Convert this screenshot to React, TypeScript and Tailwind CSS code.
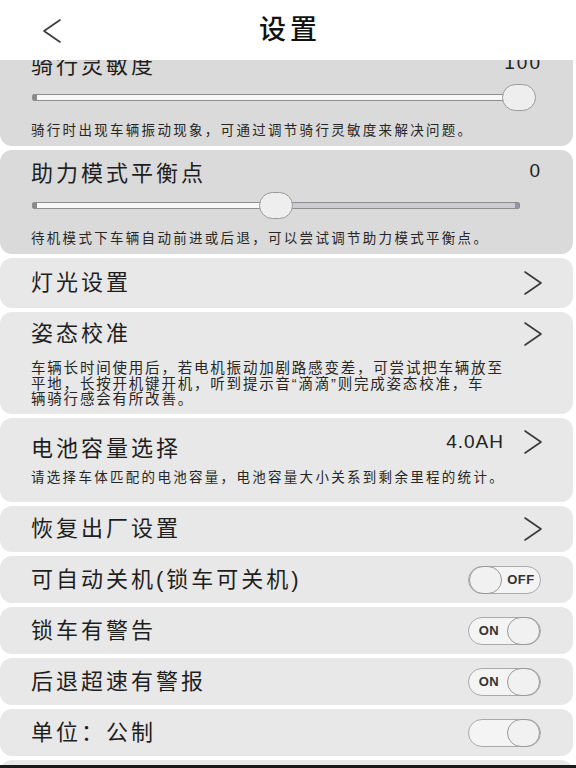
import React from 'react';

const Chevron = ({ left = false }: { left?: boolean }) => (
  <svg width="20" height="26" viewBox="0 0 20 26" fill="none" stroke="#3a3a3a" strokeWidth="1.6" strokeLinecap="round" strokeLinejoin="round">
    {left ? <polyline points="18,2 2,13 18,24" /> : <polyline points="2,2 18,13 2,24" />}
  </svg>
);

const Slider = ({ pct }: { pct: number }) => (
  <div className="relative h-[7px] rounded-[2px] border border-[#8e8e8e] bg-[#cdcdd1]">
    <div className="h-full bg-[#f7f7f7]" style={{ width: `${pct}%` }} />
    <div className="absolute left-0 top-0 h-full w-[4px] bg-[#8a8a8a]" />
    <div className="absolute right-0 top-0 h-full w-[4px] bg-[#9494a0]" />
    <div
      className="absolute top-[-11px] h-[27px] w-[34px] rounded-full border border-[#9a9a9a] bg-[#eeeeee]"
      style={{ left: `calc(${pct}% - 17px)` }}
    />
  </div>
);

const Toggle = ({ state }: { state: 'on' | 'off' | 'blank' }) => {
  const knob = <div className="h-[28px] w-[33px] shrink-0 rounded-full border border-[#999] bg-[#f1f1f1]" />;
  return (
    <div className="flex h-[28px] w-[73px] items-center rounded-full border border-[#aaa] bg-[#f4f4f4] text-[13px] font-bold tracking-[0.5px] text-[#333]">
      {state === 'off' && (
        <>
          {knob}
          <span className="flex-1 text-center">OFF</span>
        </>
      )}
      {state === 'on' && (
        <>
          <span className="flex-1 pl-[2px] text-center">ON</span>
          {knob}
        </>
      )}
      {state === 'blank' && (
        <>
          <span className="flex-1" />
          {knob}
        </>
      )}
    </div>
  );
};

const title = 'text-[22px] leading-[28px] tracking-[3px] text-[#1e1e1e]';
const desc = 'text-[13.5px] leading-[18px] tracking-[2.3px] text-[#262626]';

const SliderCard = ({ name, value, pct, note }: { name: string; value: string; pct: number; note: string }) => (
  <div className="mr-[3px] h-[104px] rounded-[12px] bg-[#dadada] pt-[10px]">
    <div className="flex items-start justify-between pl-[31px] pr-[31px]">
      <span className={title}>{name}</span>
      <span className="text-[19px] leading-[22px] tracking-[2px] text-[#222]">{value}</span>
    </div>
    <div className="mt-[4px] flex h-[26px] flex-col justify-center pl-[32px] pr-[53px]">
      <Slider pct={pct} />
    </div>
    <div className={`mt-[12px] pl-[31px] ${desc}`}>{note}</div>
  </div>
);

const LinkCard = ({ name }: { name: string }) => (
  <div className="mr-[3px] flex h-[50px] items-center justify-between rounded-[12px] bg-[#e8e8e8] pl-[31px] pr-[30px]">
    <span className={title}>{name}</span>
    <Chevron />
  </div>
);

const ToggleCard = ({ name, state }: { name: string; state: 'on' | 'off' | 'blank' }) => (
  <div className="mr-[3px] flex h-[47px] items-center justify-between rounded-[12px] bg-[#e8e8e8] pl-[31px] pr-[32px]">
    <span className={title}>{name}</span>
    <Toggle state={state} />
  </div>
);

export default function App() {
  return (
    <div className="flex h-[768px] w-[576px] flex-col overflow-hidden bg-white font-['Liberation_Sans','Noto_Sans_CJK_SC',sans-serif]">
      <div className="relative flex h-[60px] shrink-0 items-center justify-center">
        <div className="absolute left-[42px] top-[18px]">
          <Chevron left />
        </div>
        <span className="pl-[4px] text-[27px] font-medium tracking-[4px] text-[#111]">设置</span>
      </div>

      <div className="h-[705px] shrink-0 overflow-hidden">
        <div className="-mt-[18px] flex flex-col gap-[4px]">
          <SliderCard name="骑行灵敏度" value="100" pct={100} note="骑行时出现车辆振动现象，可通过调节骑行灵敏度来解决问题。" />
          <SliderCard name="助力模式平衡点" value="0" pct={50} note="待机模式下车辆自动前进或后退，可以尝试调节助力模式平衡点。" />
          <LinkCard name="灯光设置" />

          <div className="mr-[3px] h-[102px] rounded-[12px] bg-[#e8e8e8] pt-[8px]">
            <div className="flex items-center justify-between pl-[31px] pr-[30px]">
              <span className={title}>姿态校准</span>
              <Chevron />
            </div>
            <div className="mt-[13px] pl-[31px] text-[14.5px] leading-[15.5px] tracking-[1.8px] text-[#262626]">
              车辆长时间使用后，若电机振动加剧路感变差，可尝试把车辆放至
              <br />
              平地，长按开机键开机，听到提示音“滴滴”则完成姿态校准，车
              <br />
              辆骑行感会有所改善。
            </div>
          </div>

          <div className="mr-[3px] h-[84px] rounded-[12px] bg-[#e8e8e8] pt-[10px]">
            <div className="flex items-start justify-between pl-[31px] pr-[30px]">
              <span className={`mt-[7px] ${title}`}>电池容量选择</span>
              <div className="flex items-center gap-[19px]">
                <span className="text-[19px] leading-[28px] tracking-[1px] text-[#222]">4.0AH</span>
                <Chevron />
              </div>
            </div>
            <div className={`mt-[6px] pl-[31px] ${desc}`}>请选择车体匹配的电池容量，电池容量大小关系到剩余里程的统计。</div>
          </div>

          <div className="mr-[3px] flex h-[46px] items-center justify-between rounded-[12px] bg-[#e8e8e8] pl-[31px] pr-[30px]">
            <span className={title}>恢复出厂设置</span>
            <Chevron />
          </div>

          <ToggleCard name="可自动关机(锁车可关机)" state="off" />
          <ToggleCard name="锁车有警告" state="on" />
          <ToggleCard name="后退超速有警报" state="on" />
          <ToggleCard name="单位：公制" state="blank" />
          <div className="mr-[3px] h-[48px] rounded-[12px] bg-[#e8e8e8]" />
        </div>
      </div>
      <div className="h-[3px] shrink-0 bg-[#1a1a1a]" />
    </div>
  );
}
